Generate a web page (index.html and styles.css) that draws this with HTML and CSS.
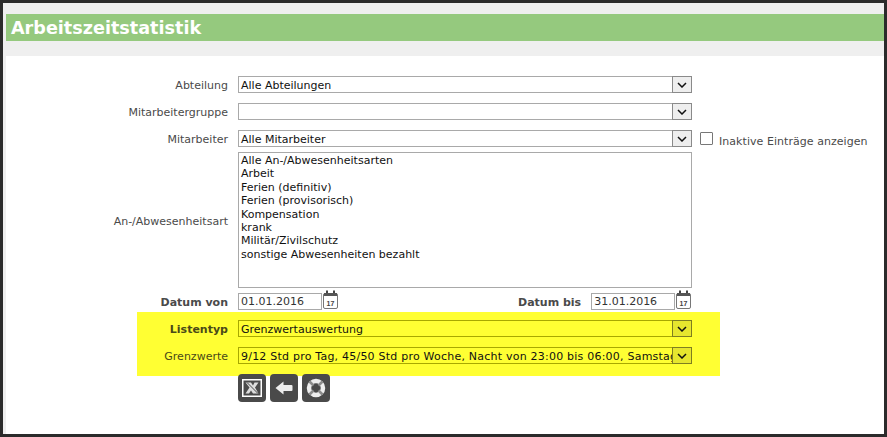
FILE: index.html
```html
<!DOCTYPE html>
<html lang="de">
<head>
<meta charset="utf-8">
<title>Arbeitszeitstatistik</title>
<link rel="stylesheet" href="styles.css">
</head>
<body>
<main class="frame">
  <h1 class="title">Arbeitszeitstatistik</h1>
  <form class="panel">
    <div class="row">
      <label class="label">Abteilung</label>
      <div class="select"><span class="value">Alle Abteilungen</span><span class="arrow"><svg viewBox="0 0 10 6" width="10" height="6"><path d="M1 1l4 4 4-4" fill="none" stroke="#111" stroke-width="1.500"/></svg></span></div>
    </div>
    <div class="row">
      <label class="label">Mitarbeitergruppe</label>
      <div class="select"><span class="value"></span><span class="arrow"><svg viewBox="0 0 10 6" width="10" height="6"><path d="M1 1l4 4 4-4" fill="none" stroke="#111" stroke-width="1.500"/></svg></span></div>
    </div>
    <div class="row">
      <label class="label">Mitarbeiter</label>
      <div class="select"><span class="value">Alle Mitarbeiter</span><span class="arrow"><svg viewBox="0 0 10 6" width="10" height="6"><path d="M1 1l4 4 4-4" fill="none" stroke="#111" stroke-width="1.500"/></svg></span></div>
      <span class="check"><span class="box"></span>Inaktive Einträge anzeigen</span>
    </div>
    <div class="row row-list">
      <label class="label">An-/Abwesenheitsart</label>
      <ul class="listbox">
        <li>Alle An-/Abwesenheitsarten</li>
        <li>Arbeit</li>
        <li>Ferien (definitiv)</li>
        <li>Ferien (provisorisch)</li>
        <li>Kompensation</li>
        <li>krank</li>
        <li>Militär/Zivilschutz</li>
        <li>sonstige Abwesenheiten bezahlt</li>
      </ul>
    </div>
    <div class="row row-dates">
      <label class="label strong">Datum von</label>
      <div class="date-cell">
        <span class="date">01.01.2016</span>
        <svg class="cal" viewBox="0 0 15 19" width="15" height="19"><path d="M3 .5h2v3H3zM10 .5h2v3h-2z" fill="#444"/><rect x=".5" y="3.500" width="14" height="15" rx="1.500" fill="#fff" stroke="#777"/><path d="M1 3h13v3H1z" fill="#555"/><text x="7.500" y="15.500" class="cal-text">17</text></svg>
      </div>
      <div class="date-end">
        <label class="label-inline strong">Datum bis</label>
        <span class="date">31.01.2016</span>
        <svg class="cal" viewBox="0 0 15 19" width="15" height="19"><path d="M3 .5h2v3H3zM10 .5h2v3h-2z" fill="#444"/><rect x=".5" y="3.500" width="14" height="15" rx="1.500" fill="#fff" stroke="#777"/><path d="M1 3h13v3H1z" fill="#555"/><text x="7.500" y="15.500" class="cal-text">17</text></svg>
      </div>
    </div>
    <div class="marked">
      <div class="row">
        <label class="label strong">Listentyp</label>
        <div class="select"><span class="value">Grenzwertauswertung</span><span class="arrow"><svg viewBox="0 0 10 6" width="10" height="6"><path d="M1 1l4 4 4-4" fill="none" stroke="#111" stroke-width="1.500"/></svg></span></div>
      </div>
      <div class="row">
        <label class="label">Grenzwerte</label>
        <div class="select"><span class="value value-wide">9/12 Std pro Tag, 45/50 Std pro Woche, Nacht von 23:00 bis 06:00, Samstag</span><span class="arrow"><svg viewBox="0 0 10 6" width="10" height="6"><path d="M1 1l4 4 4-4" fill="none" stroke="#111" stroke-width="1.500"/></svg></span></div>
      </div>
    </div>
    <div class="actions">
      <button type="button" class="action" aria-label="Excel"><svg viewBox="0 0 20 18" width="20" height="18"><rect x=".75" y=".75" width="18.500" height="16.500" fill="none" stroke="#fff" stroke-width="1.500"/><path d="M3.500 3.500h5.500l2 3 1.500-3h4l-3.500 5 3.500 6h-5.500l-2-3-2 3h-3.500l4-6z" fill="#ddd"/><path d="M5 3.500l11 11" stroke="#4a4a4a" stroke-width="1"/></svg></button>
      <button type="button" class="action" aria-label="Zurück"><svg viewBox="0 0 18 14" width="18" height="14"><path d="M8.500.5v3.500h8a1 1 0 0 1 1 1v4a1 1 0 0 1-1 1h-8v3.500L.5 7z" fill="#eee"/></svg></button>
      <button type="button" class="action" aria-label="Hilfe"><svg viewBox="0 0 20 20" width="20" height="20"><circle cx="10" cy="10" r="7" fill="none" stroke="#eee" stroke-width="4.500"/><path d="M3.500 3.500l4 4M16.500 3.500l-4 4M3.500 16.500l4-4M16.500 16.500l-4-4" stroke="#8c8c8c" stroke-width="2.500"/></svg></button>
    </div>
  </form>
</main>
</body>
</html>
```
FILE: styles.css
```css
* { box-sizing: border-box; }
html, body { margin: 0; padding: 0; }
body { width: 887px; height: 437px; background: #2b2b2b; padding: 3px; overflow: hidden; font-family: "DejaVu Sans", sans-serif; font-size: 11px; color: #4a4a4a; }
.frame { height: 431px; width: 881px; background: #efefef; padding: 11px 0 0 3px; }
.title { margin: 0; height: 27px; background: #95c97e; color: #fff; font-size: 17.600px; font-weight: 700; line-height: 29px; padding-left: 5px; }
.panel { margin-top: 15px; background: #fff; height: 378px; padding-top: 15px; display: flex; flex-direction: column; }
.row { display: flex; align-items: center; height: 27px; }
.label { width: 222px; text-align: right; margin-right: 10px; flex: none; padding-top: 2px; }
.strong { font-weight: 700; }
.select { width: 454px; height: 17px; border: 1px solid #a9a9a9; background: #fff; display: flex; justify-content: space-between; flex: none; color: #111; }
.value { flex: 1; min-width: 0; line-height: 15px; padding: 1px 0 0 2px; white-space: nowrap; overflow: hidden; }
.value-wide { letter-spacing: .22px; }
.arrow { width: 20px; height: 17px; margin: -1px -1px -1px 0; background: #eee; border: 1px solid #8a8a8a; display: flex; align-items: center; justify-content: center; flex: none; }
.check { display: flex; align-items: center; margin-left: 8px; margin-top: 6px; letter-spacing: .05px; }
.box { width: 13px; height: 13px; border: 1px solid #777; margin-right: 6px; border-radius: 1px; margin-top: -6px; }
.row-list { height: 136px; }
.listbox { list-style: none; margin: 0; padding: 1px 2px 0; width: 454px; height: 136px; border: 1px solid #a9a9a9; color: #111; line-height: 13.400px; }
.row-dates { height: 24px; align-items: flex-end; padding-bottom: 2px; }
.date-cell { display: flex; align-items: flex-end; width: 280px; flex: none; }
.date { display: block; width: 84px; height: 17px; line-height: 15px; border: 1px solid #a9a9a9; padding-left: 2px; margin-right: 1px; color: #333; }
.date-end { display: flex; align-items: flex-end; }
.row-dates .label, .label-inline { line-height: 15px; padding-top: 0; padding-bottom: 0; }
.label-inline { margin-right: 10px; }
.cal { display: block; margin-bottom: 1px; }
.cal-text { font-size: 7px; font-weight: 700; text-anchor: middle; fill: #444; font-family: "Liberation Sans", sans-serif; }
.marked { margin-left: 131px; width: 583px; height: 64px; background: #ffff33; padding-top: 3px; }
.marked .label { width: 91px; color: #4a4a18; }
.marked .select { border-color: #a8a800; background: #ffff33; }
.marked .arrow { background: #e6e62e; border-color: #7e7e20; }
.actions { display: flex; gap: 4px; padding-left: 232px; margin-top: -2px; }
.action { width: 28px; height: 28px; padding: 0; border: 0; border-radius: 4px; background: #4a4a4a; display: flex; align-items: center; justify-content: center; }
```
